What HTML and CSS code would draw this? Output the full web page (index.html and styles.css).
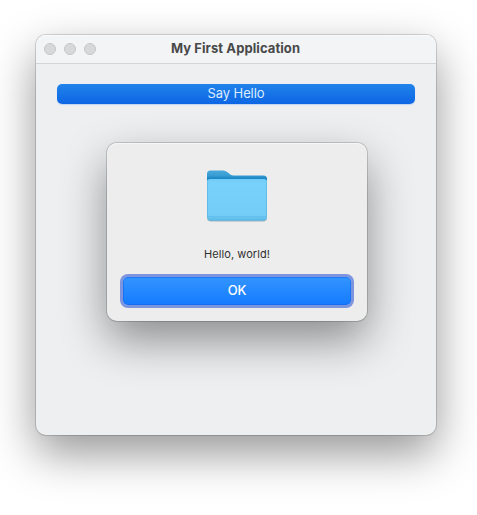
FILE: index.html
```html
<!DOCTYPE html>
<html lang="en">
<head>
<meta charset="utf-8">
<title>My First Application</title>
<link rel="stylesheet" href="styles.css">
</head>
<body>
<main class="window">
  <header class="titlebar">
    <div class="controls"><i></i><i></i><i></i></div>
    <h1 class="title">My First Application</h1>
  </header>
  <section class="content">
    <button class="hello">Say Hello</button>
  </section>
  <div class="dialog" role="dialog">
    <svg class="folder" width="64" height="56" viewBox="0 0 64 56">
      <defs>
        <linearGradient id="back" x1="0" y1="0" x2="0" y2="1">
          <stop offset="0" stop-color="#48a8da"/>
          <stop offset=".4" stop-color="#3c9fd4"/>
          <stop offset=".75" stop-color="#1683c2"/>
          <stop offset="1" stop-color="#1683c2"/>
        </linearGradient>
        <linearGradient id="front" x1="0" y1="0" x2="0" y2="1">
          <stop offset="0" stop-color="#70cbf5"/>
          <stop offset=".1" stop-color="#78d1fa"/>
          <stop offset=".86" stop-color="#74cdf7"/>
          <stop offset="1" stop-color="#59b8e5"/>
        </linearGradient>
      </defs>
      <path d="M2 6Q2 2.500 5.500 2.500H18Q20.500 2.500 22.500 4.200L25 6.300Q26.500 7.500 29 7.500H58.500Q62 7.500 62 11V14H2Z" fill="url(#back)"/>
      <path d="M2 14V49.500Q2 53.500 6 53.500H58Q62 53.500 62 49.500V14Z" fill="#7d929c" opacity=".65"/>
      <path d="M2 14Q2 11 5 11H59Q62 11 62 14V48.500Q62 52.700 57.800 52.700H6.200Q2 52.700 2 48.500Z" fill="url(#front)"/>
      <path d="M2.500 14V49M61.500 14V49" stroke="#57b4df" opacity=".65"/>
      <path d="M3 48.500H61" stroke="#5dbce9" opacity=".6"/>
    </svg>
    <p class="message">Hello, world!</p>
    <button class="ok">OK</button>
  </div>
</main>
</body>
</html>
```
FILE: styles.css
```css
* { box-sizing: border-box; }

body {
  margin: 0;
  height: 515px;
  padding: 35px 0 0 36px;
  overflow: hidden;
  background: #fff;
  font-family: Inter, "Liberation Sans", sans-serif;
}

.window {
  position: relative;
  width: 400px;
  height: 400px;
  border-radius: 10px;
  background: #edeff1;
  box-shadow: 0 0 0 1px rgba(0, 0, 0, .15), 0 18px 46px rgba(0, 0, 0, .42);
}

.titlebar {
  display: grid;
  grid-template-columns: 64px 1fr 64px;
  align-items: center;
  height: 29px;
  border-bottom: 1px solid #d3d5d7;
  border-radius: 10px 10px 0 0;
  background: #f3f4f6;
  box-shadow: inset 0 1px #fafbfc;
}

.controls { display: flex; gap: 8px; padding-left: 8px; }

.controls i {
  width: 12px;
  height: 12px;
  border: 1px solid #c6c7c8;
  border-radius: 50%;
  background: #d7d8da;
}

.title {
  margin: 0 1px 2px 0;
  color: #484949;
  font-size: 13px;
  font-weight: 700;
  line-height: 16px;
  letter-spacing: .08px;
  text-align: center;
  white-space: nowrap;
}

.content { padding: 20px 21px; }

button {
  display: block;
  padding: 0;
  border: 0;
  font-family: inherit;
  font-size: 13px;
  text-align: center;
}

.hello {
  width: 358px;
  height: 20px;
  padding-bottom: 2px;
  border-radius: 5px;
  background: linear-gradient(#2083ea, #0d66e4);
  box-shadow: 0 1px 1px rgba(50, 130, 240, .25);
  color: #dcecff;
  line-height: 18px;
  letter-spacing: -.1px;
}

.dialog {
  position: absolute;
  left: 71px;
  top: 108px;
  display: flex;
  flex-direction: column;
  align-items: center;
  width: 260px;
  height: 178px;
  padding-top: 25px;
  border-radius: 10px;
  background: #ededed;
  box-shadow: inset 0 1px #f6f6f6, 0 0 0 1px rgba(0, 0, 0, .16), 0 19px 45px rgba(0, 0, 0, .42);
}

.folder { display: block; }

.message {
  margin: 23px 0 16px;
  color: #303030;
  font-size: 11px;
  line-height: 14px;
  letter-spacing: .07px;
}

.ok {
  width: 228px;
  height: 28px;
  padding-bottom: 2px;
  border-radius: 5px;
  background: linear-gradient(#3395ff, #147bff);
  box-shadow: inset 0 0 0 1px rgba(15, 95, 235, .5), 0 0 0 3px #7d94df;
  color: #fff;
  font-weight: 500;
  line-height: 26px;
  letter-spacing: -.3px;
}
```
